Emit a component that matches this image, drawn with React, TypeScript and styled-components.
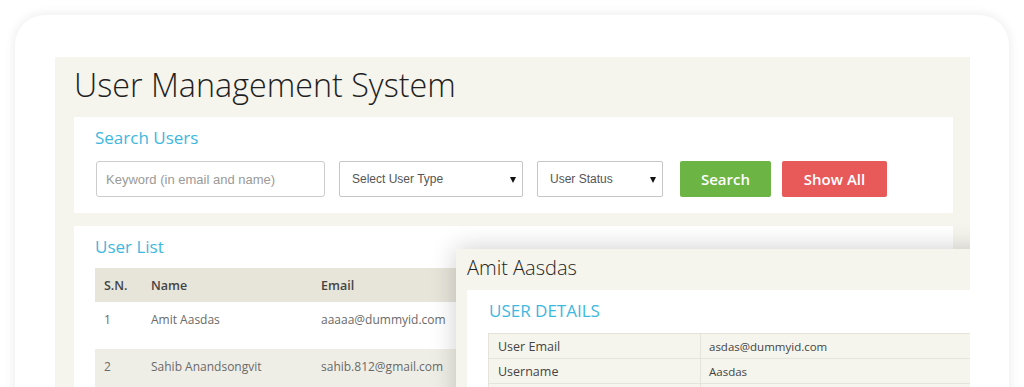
import React from 'react'
import styled, { createGlobalStyle } from 'styled-components'

type User = {
  id: number
  name: string
  email: string
}

const users: User[] = [
  { id: 1, name: 'Amit Aasdas', email: 'aaaaa@dummyid.com' },
  { id: 2, name: 'Sahib Anandsongvit', email: 'sahib.812@gmail.com' }
]

// last row only shows its top border in the shot
const details = [
  { label: 'User Email', value: 'asdas@dummyid.com' },
  { label: 'Username', value: 'Aasdas' },
  { label: '', value: '' }
]

const App: React.FC = () => {
  return (
    <>
      <GlobalStyle />
      <Frame>
        <Panel>
          <PageTitle>User Management System</PageTitle>

          <Card>
            <CardTitle>Search Users</CardTitle>
            <SearchRow>
              <TextInput placeholder="Keyword (in email and name)" />
              <FakeSelect $width={184}>
                Select User Type
                <Caret />
              </FakeSelect>
              <FakeSelect $width={126}>
                User Status
                <Caret />
              </FakeSelect>
              <Button $color="#6cb443" $width={91} $ml={3}>
                Search
              </Button>
              <Button $color="#e85a5a" $width={105} $ml={-3}>
                Show All
              </Button>
            </SearchRow>
          </Card>

          <ListCard>
            <CardTitle>User List</CardTitle>
            <Table>
              <thead>
                <tr>
                  <Th style={{ width: 47 }}>S.N.</Th>
                  <Th style={{ width: 170 }}>Name</Th>
                  <Th>Email</Th>
                </tr>
              </thead>
              <tbody>
                {users.map((user, i) => (
                  <Row key={user.id} $striped={i % 2 === 1}>
                    <Td>{user.id}</Td>
                    <Td>{user.name}</Td>
                    <Td>{user.email}</Td>
                  </Row>
                ))}
              </tbody>
            </Table>
          </ListCard>

          <DetailPopup>
            <PopupTitle>Amit Aasdas</PopupTitle>
            <PopupBody>
              <DetailsHeading>User Details</DetailsHeading>
              <DetailTable>
                <tbody>
                  {details.map((d, i) => (
                    <tr key={i}>
                      <DetailLabel>{d.label}</DetailLabel>
                      <DetailValue>{d.value}</DetailValue>
                    </tr>
                  ))}
                </tbody>
              </DetailTable>
            </PopupBody>
          </DetailPopup>
        </Panel>
      </Frame>
    </>
  )
}

const GlobalStyle = createGlobalStyle`
  html, body {
    margin: 0;
    padding: 0;
    background: #fff;
    height: 387px;
    overflow: hidden;
  }
  * {
    box-sizing: border-box;
  }
  body {
    font-family: 'Open Sans', 'Liberation Sans', sans-serif;
  }
`

const Frame = styled.div`
  margin: 15px 15px 0 15px;
  height: 520px;
  background: #fff;
  border-radius: 30px;
  box-shadow: 0 0 12px rgba(0, 0, 0, 0.09);
  padding: 42px 39px 0 40px;
`

const Panel = styled.div`
  position: relative;
  overflow: hidden;
  height: 480px;
  background: #f5f4ed;
  padding: 0 17px 0 19px;
  display: flex;
  flex-direction: column;
`

const PageTitle = styled.h1`
  margin: 0;
  height: 60px;
  padding-top: 5px;
  font-size: 32.3px;
  line-height: 44px;
  font-weight: 300;
  color: #1f1f1f;
`

const Card = styled.div`
  background: #fff;
  padding: 8px 21px 16px 21px;
  display: flex;
  flex-direction: column;
  gap: 12px;
`

const ListCard = styled(Card)`
  margin-top: 13px;
  flex: 1;
  gap: 10px;
`

const CardTitle = styled.h2`
  margin: 0;
  padding-top: 1px;
  font-size: 17px;
  line-height: 23px;
  font-weight: 400;
  color: #3db8e0;
`

const SearchRow = styled.div`
  display: flex;
  align-items: center;
  gap: 14px;
  padding-left: 1px;
`

const TextInput = styled.input`
  width: 229px;
  height: 36px;
  border: 1px solid #cccccc;
  border-radius: 3px;
  padding: 0 9px;
  font-family: 'Liberation Sans', Arial, sans-serif;
  font-size: 13px;
  color: #555;
  outline: none;
  &::placeholder {
    color: #9a9a9a;
  }
`

const FakeSelect = styled.div<{ $width: number }>`
  position: relative;
  width: ${(p) => p.$width}px;
  height: 36px;
  border: 1px solid #c6c6c6;
  border-radius: 2px;
  padding: 0 12px;
  display: flex;
  align-items: center;
  font-family: 'Liberation Sans', Arial, sans-serif;
  font-size: 12px;
  color: #555;
`

const Caret = styled.span`
  position: absolute;
  right: 6px;
  top: 15px;
  width: 0;
  height: 0;
  border-left: 3.5px solid transparent;
  border-right: 3.5px solid transparent;
  border-top: 6px solid #111;
`

const Button = styled.button<{ $color: string; $width: number; $ml: number }>`
  width: ${(p) => p.$width}px;
  height: 36px;
  margin-left: ${(p) => p.$ml}px;
  border: none;
  border-radius: 2px;
  background: ${(p) => p.$color};
  color: #fff;
  font-family: 'Open Sans', sans-serif;
  font-size: 15px;
  font-weight: 600;
  cursor: pointer;
`

const Table = styled.table`
  width: 100%;
  border-collapse: collapse;
  font-size: 12px;
`

const Th = styled.th`
  height: 34px;
  background: #e7e5da;
  text-align: left;
  padding: 0 9px;
  font-weight: 600;
  font-size: 12.5px;
  color: #444;
`

const Row = styled.tr<{ $striped: boolean }>`
  background: ${(p) => (p.$striped ? '#efeee6' : '#fff')};
  height: 47px;
`

const Td = styled.td`
  vertical-align: top;
  padding: 9px 9px 0;
  line-height: 17px;
  color: #6a6a6a;
  font-size: 12px;
`

const DetailPopup = styled.div`
  position: absolute;
  left: 401px;
  top: 192px;
  width: 620px;
  height: 320px;
  background: #f5f4ed;
  box-shadow: 0 0 24px rgba(0, 0, 0, 0.2);
  padding: 0 0 0 11px;
  display: flex;
  flex-direction: column;
`

const PopupTitle = styled.div`
  height: 41px;
  padding-top: 5px;
  font-size: 20px;
  line-height: 27px;
  font-weight: 300;
  color: #1f1f1f;
`

const PopupBody = styled.div`
  flex: 1;
  background: #fff;
  padding: 8px 0 0 21px;
`

const DetailsHeading = styled.h3`
  margin: 0 0 11px 1px;
  padding-top: 1px;
  font-size: 17px;
  line-height: 23px;
  font-weight: 400;
  text-transform: uppercase;
  color: #3db8e0;
`

const DetailTable = styled.table`
  width: 560px;
  border-collapse: collapse;
  background: #f5f4ed;
`

const DetailLabel = styled.td`
  width: 212px;
  height: 25px;
  padding: 0 9px;
  border: 1px solid #e6e4da;
  font-size: 12.5px;
  color: #444;
`

const DetailValue = styled.td`
  height: 25px;
  padding: 0 8px;
  border: 1px solid #e6e4da;
  font-size: 11.5px;
  color: #444;
`

export default App
